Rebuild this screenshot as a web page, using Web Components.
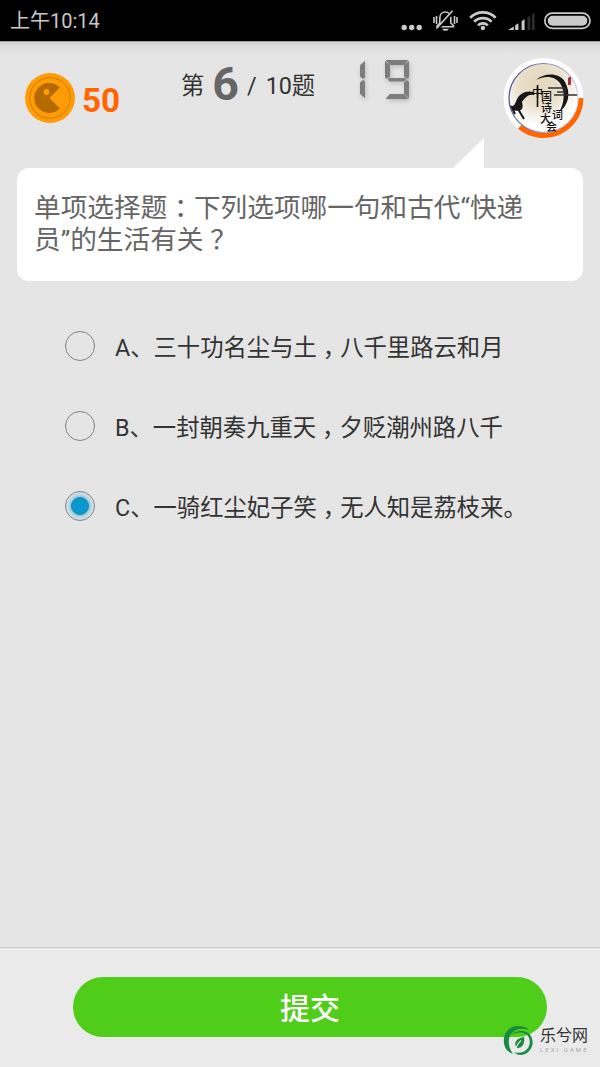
<!DOCTYPE html>
<html lang="zh-CN">
<head>
<meta charset="utf-8">
<title>答题</title>
<style>
  html, body {
    margin: 0;
    padding: 0;
    height: 100%;
    overflow: hidden;
  }
  body {
    background: #e5e5e5;
    font-family: Roboto, "Noto Sans CJK SC", sans-serif;
    color: #333;
  }
</style>
</head>
<body>
<quiz-page>
  <status-bar slot="status">上午10:14</status-bar>
  <coin-count slot="header">50</coin-count>
  <quiz-progress slot="header"><span slot="current">6</span><span slot="total">10题</span></quiz-progress>
  <quiz-timer slot="header" value="19"></quiz-timer>
  <quiz-avatar slot="header"></quiz-avatar>
  <question-bubble slot="question">单项选择题<punct-mark>：</punct-mark>下列选项哪一句和古代“快递<br>员”的生活有关<punct-mark>？</punct-mark></question-bubble>
  <answer-option slot="options">A、三十功名尘与土<punct-mark>，</punct-mark>八千里路云和月</answer-option>
  <answer-option slot="options">B、一封朝奏九重天<punct-mark>，</punct-mark>夕贬潮州路八千</answer-option>
  <answer-option slot="options" checked>C、一骑红尘妃子笑<punct-mark>，</punct-mark>无人知是荔枝来。</answer-option>
  <submit-bar slot="footer">提交</submit-bar>
</quiz-page>
<site-mark></site-mark>

<script>
customElements.define(
  "quiz-page",
  class extends HTMLElement {
    constructor() {
      super();
      this.attachShadow({ mode: "open" }).innerHTML = `
        <style>
          :host {
            display: flex;
            flex-direction: column;
            width: 600px;
            height: 1067px;
            background: #e5e5e5;
          }
          header {
            display: flex;
            align-items: flex-start;
            box-sizing: border-box;
            height: 127px;
            padding: 0 16px 0 25px;
            background: linear-gradient(#8c8c8c 0, #d2d2d2 1.5px, #dcdcdc 5px, #e5e5e5 13px);
          }
          main {
            flex: 1;
            padding: 0 17px;
          }
          .options {
            display: flex;
            flex-direction: column;
            padding: 25px 0 0 48px;
          }
        </style>
        <slot name="status"></slot>
        <header><slot name="header"></slot></header>
        <main>
          <slot name="question"></slot>
          <div class="options"><slot name="options"></slot></div>
        </main>
        <slot name="footer"></slot>`;
    }
  }
);

// full-width punctuation sits in the middle of its cell
customElements.define(
  "punct-mark",
  class extends HTMLElement {
    constructor() {
      super();
      // no whitespace around the slot, it would show up as a gap in the line
      this.attachShadow({ mode: "open" }).innerHTML =
        `<style>:host { display: inline; padding: 0 0.25em; font-feature-settings: "halt"; }</style><slot></slot>`;
    }
  }
);

customElements.define(
  "status-bar",
  class extends HTMLElement {
    constructor() {
      super();
      this.attachShadow({ mode: "open" }).innerHTML = `
        <style>
          :host {
            display: flex;
            align-items: center;
            justify-content: space-between;
            box-sizing: border-box;
            height: 41px;
            padding-left: 10px;
            background: #000;
            color: #c8c8c8;
            font-size: 20px;
            line-height: 40px;
          }
          svg { display: block; }
        </style>
        <span><slot></slot></span>
        <svg width="200" height="41" viewBox="400 0 200 41" fill="#cacaca">
          <circle cx="404.2" cy="27.5" r="2.7"/>
          <circle cx="411.7" cy="27.5" r="2.7"/>
          <circle cx="419.2" cy="27.5" r="2.7"/>
          <g fill="none" stroke="#cacaca" stroke-width="1.6">
            <path d="M437 26.800h16.500v-1.200l-2.700-2.600v-5c0-3.400-2.200-6-5.500-6s-5.500 2.600-5.500 6v5l-2.800 3z"/>
            <path d="M434 17v6M436.500 16v8M457 17v6M454.500 16v8"/>
            <path d="M438.500 28.500L453.500 12" stroke="#000" stroke-width="2"/>
            <path d="M436.500 28.500L452.500 10.800" stroke-width="1.700"/>
          </g>
          <path d="M442 28.800h7l-1.900 2h-3.200z"/>
          <g fill="none" stroke="#cacaca" stroke-width="2.700">
            <path d="M470.200 17.800a17.500 17.500 0 0 1 25.400 0"/>
            <path d="M474.200 21.800a12 12 0 0 1 17.400 0"/>
            <path d="M478 25.400a7 7 0 0 1 9.800 0"/>
          </g>
          <circle cx="482.900" cy="28" r="2.200"/>
          <path d="M508 30l5.800-3.600v3.600zM515.200 25.200l3.200-2v6.800h-3.200zM521.600 21.300l3-2v10.700h-3z"/>
          <path d="M527.500 17.500l2.800-1.800v14.300h-2.800zM532 14.500l2.600-1.700v17.200h-2.600z" fill="#2e2e2e"/>
          <rect x="544.800" y="13.200" width="45.200" height="15.200" rx="7.600" fill="none" stroke="#cacaca" stroke-width="1.700"/>
          <rect x="547.700" y="15.800" width="39.600" height="10" rx="5"/>
        </svg>`;
    }
  }
);

customElements.define(
  "coin-count",
  class extends HTMLElement {
    constructor() {
      super();
      this.attachShadow({ mode: "open" }).innerHTML = `
        <style>
          :host {
            display: flex;
            align-items: center;
            gap: 7px;
            width: 156px;
            height: 50px;
            margin-top: 32px;
            color: #f60;
            font-size: 33.3px;
            font-weight: 700;
          }
          span { padding-top: 5px; line-height: 46px; }
        </style>
        <svg width="50" height="50" viewBox="0 0 50 50">
          <circle cx="25" cy="25" r="25" fill="#ff9b05"/>
          <circle cx="25" cy="25" r="20.300" fill="none" stroke="#cf7c02" stroke-width="1"/>
          <path d="M34.800 14.400A15 15 0 1 0 34.800 35.600L24.600 25z" fill="#b36b00"/>
          <circle cx="21.500" cy="19" r="2.900" fill="#ff9b05"/>
        </svg>
        <span><slot></slot></span>`;
    }
  }
);

customElements.define(
  "quiz-progress",
  class extends HTMLElement {
    constructor() {
      super();
      this.attachShadow({ mode: "open" }).innerHTML = `
        <style>
          :host {
            display: flex;
            align-items: flex-start;
            width: 160px;
            margin-top: 16px;
            font-size: 23.300px;
            line-height: 58px;
            white-space: nowrap;
          }
          .current {
            margin: 0 8px 0 8px;
            color: #666;
            font-size: 46.600px;
            font-weight: 700;
            line-height: 54px;
          }
          .slash { margin-right: 9px; }
        </style>
        <span>第</span>
        <span class="current"><slot name="current"></slot></span>
        <span class="slash">/</span>
        <slot name="total"></slot>`;
    }
  }
);

const SEGMENTS = {
  0: "abcdef", 1: "bc", 2: "abged", 3: "abgcd", 4: "fgbc",
  5: "afgcd", 6: "afgedc", 7: "abc", 8: "abcdefg", 9: "abcdfg"
};

customElements.define(
  "quiz-timer",
  class extends HTMLElement {
    constructor() {
      super();
      const digits = [...this.getAttribute("value")]
        .map((n) => `<div class="digit">${[...SEGMENTS[n]].map((s) => `<i class="${s}"></i>`).join("")}</div>`)
        .join("");
      this.attachShadow({ mode: "open" }).innerHTML = `
        <style>
          :host {
            display: flex;
            gap: 20px;
            width: 163px;
            margin-top: 19px;
            filter: drop-shadow(1px 2px 2px rgba(0, 0, 0, 0.18));
          }
          .digit {
            display: grid;
            width: 24px;
            height: 39px;
          }
          i {
            grid-area: 1 / 1;
            background: #7d7d7d;
          }
          .a, .d, .g { width: 23px; height: 5px; justify-self: center; }
          .a { clip-path: polygon(0 0, 100% 0, 81% 100%, 19% 100%); }
          .d { align-self: end; clip-path: polygon(19% 0, 81% 0, 100% 100%, 0 100%); }
          .g { width: 19px; height: 4px; align-self: center; clip-path: polygon(12% 0, 88% 0, 100% 50%, 88% 100%, 12% 100%, 0 50%); }
          .b, .c, .e, .f { width: 5px; height: 19px; }
          .b, .c { justify-self: end; }
          .c, .e { align-self: end; }
          .b { clip-path: polygon(100% 4%, 100% 92%, 60% 100%, 0 87%, 0 27%); }
          .c { clip-path: polygon(60% 0, 100% 8%, 100% 96%, 0 73%, 0 13%); }
          .f { clip-path: polygon(0 4%, 0 92%, 40% 100%, 100% 87%, 100% 27%); }
          .e { clip-path: polygon(40% 0, 0 8%, 0 96%, 100% 73%, 100% 13%); }
        </style>
        ${digits}`;
    }
  }
);

customElements.define(
  "quiz-avatar",
  class extends HTMLElement {
    constructor() {
      super();
      this.attachShadow({ mode: "open" }).innerHTML = `
        <style>
          :host {
            display: block;
            margin: 17px 0 0 -1px;
          }
          svg { display: block; }
          text {
            font-family: "Noto Sans CJK SC", sans-serif;
            font-size: 11px;
            font-weight: 500;
            fill: #111;
          }
        </style>
        <svg width="81" height="81" viewBox="0 0 81 81">
          <defs>
            <radialGradient id="moon" cx="0.45" cy="0.3" r="0.6">
              <stop offset="0" stop-color="#e3d6ba"/>
              <stop offset="0.5" stop-color="#e9dfcb"/>
              <stop offset="0.85" stop-color="#f8f6f2"/>
              <stop offset="1" stop-color="#fff"/>
            </radialGradient>
            <linearGradient id="rim" x1="0" y1="0.3" x2="1" y2="0.6">
              <stop offset="0" stop-color="#4a4a9c"/>
              <stop offset="0.5" stop-color="#8a8abc"/>
              <stop offset="1" stop-color="#d8d8ea"/>
            </linearGradient>
          </defs>
          <circle cx="40.500" cy="40" r="40" fill="#fff"/>
          <path d="M80.500 40A40 40 0 0 1 15 70.800L19 66.500A35 35 0 0 0 75.500 40z" fill="#f60"/>
          <circle cx="40.500" cy="40" r="34.500" fill="url(#moon)" stroke="url(#rim)" stroke-width="1.200"/>
          <path d="M33 22C41 15 56 14 62 24C68 35 66 47 56 54C62 45 62 33 57 25C52 18 42 17 33 22z" fill="#161616"/>
          <path d="M7 47C13 51 12 41 17 37C21 33 27 33 31 34L31 37C25 36 22 40 19 44C20 48 20 50 18 52C13 54 8 52 7 47z" fill="#161616"/>
          <path d="M9 50l3 6M15 51l6 10" stroke="#161616" stroke-width="2"/>
          <path d="M45 30h17M51 37h23M54 34h9M62 30v4" fill="none" stroke="#333" stroke-width="1.300"/>
          <path d="M65 20q3-3 3 0v7h-3z" fill="#a83038"/>
          <path d="M34.500 27v22" stroke="#111" stroke-width="1.600"/>
          <text x="29 38 38 49 37 43" y="39 43 54 61 65 73">中国诗词大会</text>
        </svg>`;
    }
  }
);

customElements.define(
  "question-bubble",
  class extends HTMLElement {
    constructor() {
      super();
      this.attachShadow({ mode: "open" }).innerHTML = `
        <style>
          :host {
            display: block;
            position: relative;
            box-sizing: border-box;
            height: 113px;
            padding: 24px 17px;
            border-radius: 12px;
            background: #fff;
            color: #666;
            font-size: 26.670px;
            line-height: 32px;
            white-space: nowrap;
          }
          .tail {
            position: absolute;
            right: 99px;
            bottom: 100%;
            width: 31px;
            height: 30px;
            background: #fff;
            clip-path: polygon(100% 0, 100% 100%, 0 100%);
          }
        </style>
        <div class="tail"></div>
        <slot></slot>`;
    }
  }
);

customElements.define(
  "answer-option",
  class extends HTMLElement {
    constructor() {
      super();
      this.attachShadow({ mode: "open" }).innerHTML = `
        <style>
          :host {
            display: flex;
            align-items: center;
            gap: 20px;
            height: 80px;
            font-size: 23.330px;
            white-space: nowrap;
          }
          .radio {
            display: grid;
            place-items: center;
            box-sizing: border-box;
            width: 30px;
            height: 30px;
            margin-bottom: 1px;
            border: 1.500px solid #828282;
            border-radius: 50%;
          }
          :host([checked]) .radio::after {
            content: "";
            box-sizing: border-box;
            width: 18px;
            height: 18px;
            border: 1px solid #2f7f9d;
            border-radius: 50%;
            background: #0a99cf;
            box-shadow: 0 0 4px 2px rgba(80, 185, 225, 0.75);
          }
        </style>
        <div class="radio"></div>
        <span><slot></slot></span>`;
    }
  }
);

customElements.define(
  "submit-bar",
  class extends HTMLElement {
    constructor() {
      super();
      this.attachShadow({ mode: "open" }).innerHTML = `
        <style>
          :host {
            display: block;
            box-sizing: border-box;
            height: 120px;
            padding: 29px 53px 30px 73px;
            border-top: 1px solid #c8c8c8;
            background: #eaeaea;
          }
          button {
            display: block;
            box-sizing: border-box;
            width: 100%;
            height: 60px;
            padding: 3px 0 0;
            border: 0;
            border-radius: 30px;
            background: #50cd19;
            color: #fff;
            font: 500 30px/57px Roboto, "Noto Sans CJK SC", sans-serif;
          }
        </style>
        <button><slot></slot></button>`;
    }
  }
);

customElements.define(
  "site-mark",
  class extends HTMLElement {
    constructor() {
      super();
      this.attachShadow({ mode: "open" }).innerHTML = `
        <style>
          :host {
            position: absolute;
            left: 503px;
            top: 1025px;
            display: flex;
            gap: 7px;
          }
          .name {
            padding-top: 1px;
            color: #333;
            font-size: 16px;
            line-height: 20px;
          }
          .latin {
            color: #a8a8a8;
            font-size: 6px;
            line-height: 8px;
            letter-spacing: 2.05px;
            white-space: nowrap;
          }
        </style>
        <svg width="30" height="31" viewBox="0 0 30 31">
          <path d="M10 29C4 27 .8 22 .8 16C.8 7 7 1 15 1C20 1 24 2.500 26 5C19 2.500 12 3.500 8 9C4.500 14 5 22 10 29z" fill="#188a41"/>
          <path d="M8.500 10C13 5 22 4.500 27 9.500C31.500 16 30 24 24 28C19.500 31 14 30.500 11 27C16 29 22 27.500 25 23C28 18 27 12 23.500 9.500C19 6.500 13 7 8.500 10z" fill="#188a41"/>
          <path d="M21 12C22 18 20 23 14 23C9.500 18 14 13 21 12z" fill="#188a41"/>
          <path d="M18 15.500C15 18 13.500 21 12.500 25" fill="none" stroke="#e4efe2" stroke-width="1.100"/>
        </svg>
        <div>
          <div class="name">乐兮网</div>
          <div class="latin">LEXI GAME</div>
        </div>`;
    }
  }
);
</script>
</body>
</html>
